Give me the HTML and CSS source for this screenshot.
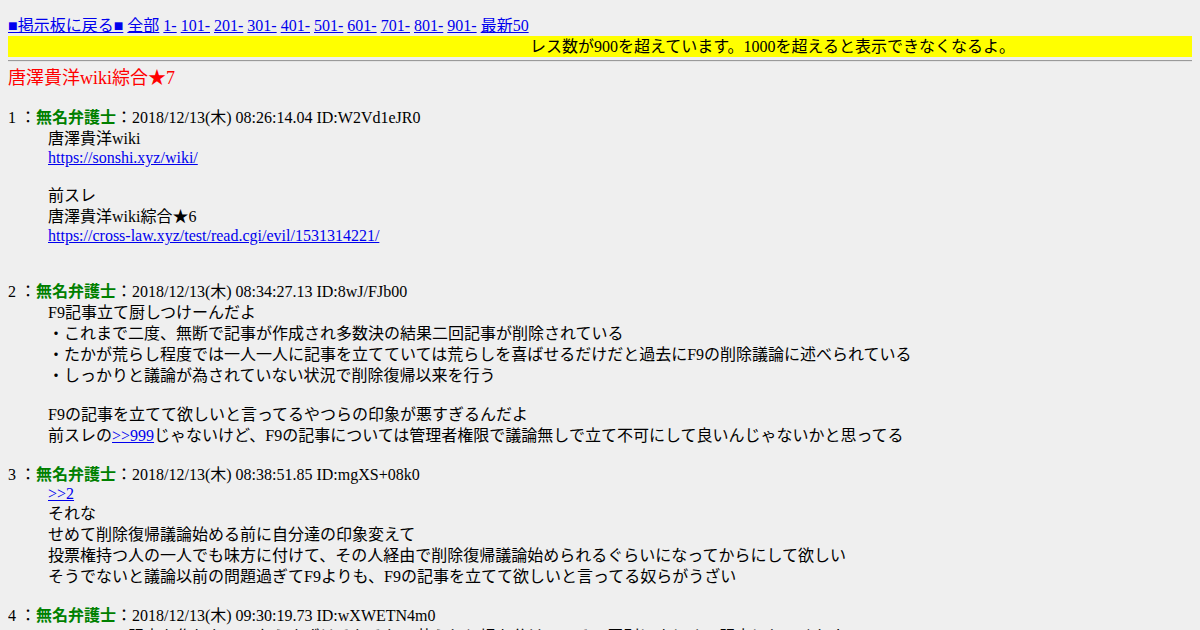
FILE: index.html
```html
<!DOCTYPE html>
<html lang="ja">
<head>
    <meta charset="UTF-8">
    <title>唐澤貴洋wiki綜合★7</title>
    <link rel="stylesheet" href="styles.css">
</head>
<body>
    <div class="menu">
        <a href="#">■掲示板に戻る■</a>
        <a href="#">全部</a>
        <a href="#">1-</a>
        <a href="#">101-</a>
        <a href="#">201-</a>
        <a href="#">301-</a>
        <a href="#">401-</a>
        <a href="#">501-</a>
        <a href="#">601-</a>
        <a href="#">701-</a>
        <a href="#">801-</a>
        <a href="#">901-</a>
        <a href="#">最新50</a>
    </div>
    <div class="notice">レス数が900を超えています。1000を超えると表示できなくなるよ。</div>
    <hr>
    <h1 class="title">唐澤貴洋wiki綜合★7</h1>

    <dl class="thread">
        <dt>1 ：<b class="name">無名弁護士</b>：2018/12/13(木) 08:26:14.04 ID:W2Vd1eJR0</dt>
        <dd class="first">
            <p>唐澤貴洋wiki<a class="line" href="#">https://sonshi.xyz/wiki/</a></p>
            <p>前スレ<br>唐澤貴洋wiki綜合★6<a class="line" href="#">https://cross-law.xyz/test/read.cgi/evil/1531314221/</a></p>
        </dd>

        <dt>2 ：<b class="name">無名弁護士</b>：2018/12/13(木) 08:34:27.13 ID:8wJ/FJb00</dt>
        <dd>
            <p>F9記事立て厨しつけーんだよ<br>
            ・これまで二度、無断で記事が作成され多数決の結果二回記事が削除されている<br>
            ・たかが荒らし程度では一人一人に記事を立てていては荒らしを喜ばせるだけだと過去にF9の削除議論に述べられている<br>
            ・しっかりと議論が為されていない状況で削除復帰以来を行う</p>
            <p>F9の記事を立てて欲しいと言ってるやつらの印象が悪すぎるんだよ<br>
            前スレの<a href="#">&gt;&gt;999</a>じゃないけど、F9の記事については管理者権限で議論無しで立て不可にして良いんじゃないかと思ってる</p>
        </dd>

        <dt>3 ：<b class="name">無名弁護士</b>：2018/12/13(木) 08:38:51.85 ID:mgXS+08k0</dt>
        <dd>
            <p><a class="line" href="#">&gt;&gt;2</a>それな<br>
            せめて削除復帰議論始める前に自分達の印象変えて<br>
            投票権持つ人の一人でも味方に付けて、その人経由で削除復帰議論始められるぐらいになってからにして欲しい<br>
            そうでないと議論以前の問題過ぎてF9よりも、F9の記事を立てて欲しいと言ってる奴らがうざい</p>
        </dd>

        <dt>4 ：<b class="name">無名弁護士</b>：2018/12/13(木) 09:30:19.73 ID:wXWETN4m0</dt>
        <dd>
            <p>　　　　　記事を作りたいのならまずはそれぞれの荒らしと場を分けて、その罪別にまとめて記事にしてくれよ</p>
        </dd>
    </dl>
</body>
</html>
```

FILE: styles.css
```css
/* 全体 */
body {
    margin: 8px;
    background-color: #efefef;
    color: #000;
    font-family: "Liberation Serif", "Noto Sans CJK JP", serif;
    font-size: 16px;
    line-height: 21px;
}

a {
    color: #0000ee;
}

/* 上部メニュー */
.menu {
    padding-top: 7px;
}

.notice {
    background-color: #ffff00;
    padding-left: 522px;
}

hr {
    height: 0;
    margin: 3px 0 0;
    border: 0;
    border-top: 1px solid #9a9a9a;
    border-bottom: 1px solid #e4e4e4;
}

.title {
    margin: 4px 0 0;
    color: #ff0000;
    font-size: 18px;
    font-weight: normal;
    line-height: 24px;
}

/* スレッド */
.thread {
    margin: 17px 0;
}

.thread dt {
    margin: 0;
}

.name {
    color: #008000;
}

.thread dd {
    margin: 0 0 0 40px;
}

.thread dd.first {
    padding-bottom: 17px;
}

.thread dd p {
    margin: 0 0 18px;
}

/* リンクだけの行 */
.line {
    display: block;
    width: max-content;
    line-height: 18.4px;
}
```
